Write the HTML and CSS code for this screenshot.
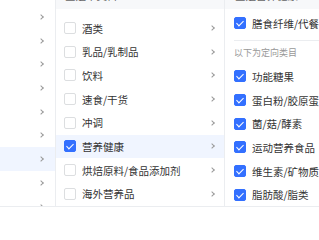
FILE: index.html
```html
<!DOCTYPE html>
<html lang="zh">
<head>
<meta charset="utf-8">
<link rel="stylesheet" href="styles.css">
</head>
<body>
<div class="panel">
  <div class="col c1">
    <ul class="list l1">
      <li class="row"><span class="arrow"></span></li>
      <li class="row"><span class="arrow"></span></li>
      <li class="row"><span class="arrow"></span></li>
      <li class="row"><span class="arrow"></span></li>
      <li class="row"><span class="arrow"></span></li>
      <li class="row"><span class="arrow"></span></li>
      <li class="row active"><span class="arrow"></span></li>
      <li class="row"><span class="arrow"></span></li>
      <li class="row"><span class="arrow"></span></li>
    </ul>
  </div>
  <div class="col c2">
    <div class="head"><span class="head-text">全选本类目</span></div>
    <ul class="list l2">
      <li class="row"><span class="cb"></span><span class="label">酒类</span><span class="arrow"></span></li>
      <li class="row"><span class="cb"></span><span class="label">乳品/乳制品</span><span class="arrow"></span></li>
      <li class="row"><span class="cb"></span><span class="label">饮料</span><span class="arrow"></span></li>
      <li class="row"><span class="cb"></span><span class="label">速食/干货</span><span class="arrow"></span></li>
      <li class="row"><span class="cb"></span><span class="label">冲调</span><span class="arrow"></span></li>
      <li class="row active"><span class="cb on"></span><span class="label">营养健康</span><span class="arrow"></span></li>
      <li class="row"><span class="cb"></span><span class="label">烘焙原料/食品添加剂</span><span class="arrow"></span></li>
      <li class="row"><span class="cb"></span><span class="label">海外营养品</span><span class="arrow"></span></li>
    </ul>
  </div>
  <div class="col c3">
    <div class="head"><span class="head-text">全选营养健康</span></div>
    <ul class="list l3">
      <li class="row"><span class="cb on"></span><span class="label">膳食纤维/代餐</span></li>
      <li class="divider"></li>
      <li class="row note">以下为定向类目</li>
      <li class="row"><span class="cb on"></span><span class="label">功能糖果</span></li>
      <li class="row"><span class="cb on"></span><span class="label">蛋白粉/胶原蛋白</span></li>
      <li class="row"><span class="cb on"></span><span class="label">菌/菇/酵素</span></li>
      <li class="row"><span class="cb on"></span><span class="label">运动营养食品</span></li>
      <li class="row"><span class="cb on"></span><span class="label">维生素/矿物质</span></li>
      <li class="row"><span class="cb on"></span><span class="label">脂肪酸/脂类</span></li>
    </ul>
  </div>
</div>
</body>
</html>
```

FILE: styles.css
```css
* { box-sizing: border-box; }
html, body {
  margin: 0;
  padding: 0;
  background: #fff;
  overflow: hidden;
  font-family: "Noto Sans CJK SC", "Noto Sans", sans-serif;
  font-size: 10.5px;
  color: #333;
}
.panel {
  display: flex;
  height: 207px;
  border-bottom: 1px solid #ebedf0;
  overflow: hidden;
}
.col {
  overflow: hidden;
  flex: none;
}
.c1 {
  width: 56px;
  border-right: 1px solid #ebedf0;
}
.c2 {
  width: 169px;
  border-right: 1px solid #ebedf0;
}
.c3 {
  flex: 1;
  min-width: 0;
}
.list {
  list-style: none;
  margin: 0;
  padding: 0;
}
.row {
  height: 23.7px;
  display: flex;
  align-items: center;
  white-space: nowrap;
}
.row.active { background: #f0f5ff; }
.l1 { padding-top: 5.2px; }
.l1 .row { justify-content: flex-end; padding-right: 11px; }
.head {
  height: 9px;
  background: #f7f8fa;
  overflow: hidden;
}
.head-text {
  display: block;
  line-height: 12px;
  margin-top: -10px;
  color: #666;
  white-space: nowrap;
}
.c2 .head-text { padding-left: 9px; }
.c3 .head-text { padding-left: 10px; }
.l2 { padding-top: 7.2px; }
.l2 .row { padding: 0 9px 0 8px; }
.l2 .label { flex: 1; }
.l3 { padding-top: 2.2px; }
.l3 .row { padding-left: 9px; }
.divider {
  height: 1px;
  margin: 5px 0 0 9px;
  background: #ebedf0;
}
.note {
  font-size: 9px;
  color: #999;
}
.cb {
  width: 12px;
  height: 12px;
  border: 1px solid #dcdee0;
  border-radius: 2px;
  background: #fff;
  margin-right: 6px;
  flex: none;
  position: relative;
}
.cb.on {
  background: #3370ff;
  border-color: #3370ff;
}
.cb.on::after {
  content: "";
  position: absolute;
  left: 3px;
  top: 1px;
  width: 3px;
  height: 6px;
  border-right: 1.5px solid #fff;
  border-bottom: 1.5px solid #fff;
  transform: rotate(45deg);
}
.label { overflow: hidden; }
.arrow {
  width: 4px;
  height: 4px;
  border-top: 1px solid #999;
  border-right: 1px solid #999;
  transform: rotate(45deg);
  flex: none;
  margin-right: 1px;
}
```
